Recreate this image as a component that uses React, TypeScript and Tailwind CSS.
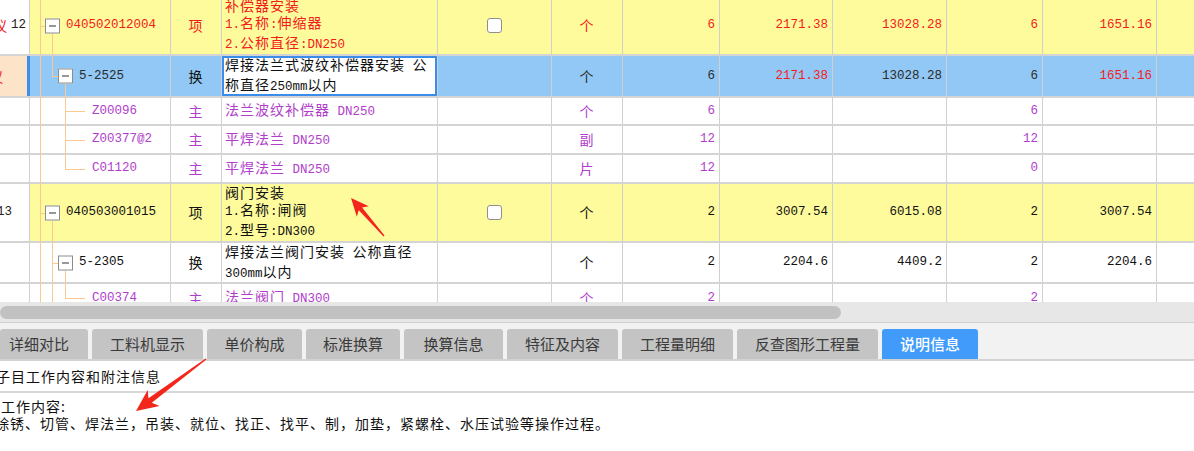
import type { ReactNode } from 'react'

const CJK = "font-['Noto_Sans_CJK_SC','Noto_Sans',sans-serif]"
const MONO = "font-['Liberation_Mono','Noto_Sans_CJK_SC',monospace] text-[12.5px] tracking-normal"

const tone = {
  red: 'text-[#f21c1c]',
  dark: 'text-[#2b2b2b]',
  purple: 'text-[#b13ecb]',
  black: 'text-[#111111]',
}
type Tone = keyof typeof tone

// ascii runs get the half-width mono face, cjk keeps the sans
function Txt({ s }: { s: string }) {
  const parts = s.match(/[\x00-\x7f]+|[^\x00-\x7f]+/g) ?? []
  return (
    <>
      {parts.map((p, i) =>
        /^[\x00-\x7f]/.test(p) ? (
          <span key={i} className={MONO}>{p}</span>
        ) : (
          <span key={i}>{p}</span>
        )
      )}
    </>
  )
}

type TreeKind = 'item' | 'sub' | 'subMore' | 'leaf' | 'leafLast' | 'leafDeep'

function MinusBox({ left }: { left: string }) {
  return (
    <span className={`absolute ${left} top-1/2 -translate-y-1/2 w-[15px] h-[15px] border border-[#8c8c8c] bg-white flex items-center justify-center`}>
      <span className="w-[7px] h-px bg-[#333]" />
    </span>
  )
}

function Tree({ kind }: { kind: TreeKind }) {
  const ln = 'absolute bg-[#f9c98f]'
  return (
    <>
      <span className={`${ln} left-[10px] top-0 bottom-[-2px] w-px`} />
      {kind === 'item' && (
        <>
          <span className={`${ln} left-[10px] top-1/2 w-[5px] h-px`} />
          <span className={`${ln} left-[22px] top-1/2 bottom-[-2px] w-px`} />
          <MinusBox left="left-[15px]" />
        </>
      )}
      {(kind === 'sub' || kind === 'subMore') && (
        <>
          <span className={`${ln} left-[22px] top-0 w-px ${kind === 'sub' ? 'h-1/2' : 'bottom-[-2px]'}`} />
          <span className={`${ln} left-[22px] top-1/2 w-[6px] h-px`} />
          <span className={`${ln} left-[35px] top-1/2 bottom-[-2px] w-px`} />
          <MinusBox left="left-[28px]" />
        </>
      )}
      {(kind === 'leaf' || kind === 'leafLast' || kind === 'leafDeep') && (
        <>
          {kind === 'leafDeep' && <span className={`${ln} left-[22px] top-0 bottom-[-2px] w-px`} />}
          <span className={`${ln} left-[35px] top-0 w-px ${kind === 'leaf' ? 'bottom-[-2px]' : 'h-1/2'}`} />
          <span className={`${ln} left-[35px] top-1/2 w-[20px] h-px`} />
        </>
      )}
    </>
  )
}

type Val = [string, Tone]

interface RowProps {
  h: string
  bg: string
  first: ReactNode
  firstCls: string
  tree: TreeKind
  code: string
  codeTone: Tone
  kind: string
  kindTone: Tone
  name: string[]
  nameTone: Tone
  editing?: boolean
  check?: boolean
  unit: string
  unitTone: Tone
  vals: Val[]
}

const valW = ['w-[97px]', 'w-[113px]', 'w-[114px]', 'w-[96px]', 'w-[114px]']

function GridRow(r: RowProps) {
  const codeLeft = r.tree === 'item' ? 'pl-[36px]' : r.tree.startsWith('sub') ? 'pl-[49px]' : 'pl-[62px]'
  return (
    <div className={`flex ${r.h} border-b-2 border-[#d4d4d4] ${r.bg}`}>
      <div className={`w-[30px] shrink-0 overflow-hidden ${r.firstCls}`}>{r.first}</div>
      <div className="relative w-[141px] shrink-0 border-r border-[#d0d0d0]">
        <Tree kind={r.tree} />
        <div className={`h-full flex items-center ${codeLeft} ${tone[r.codeTone]} ${MONO}`}>{r.code}</div>
      </div>
      <div className={`w-[51px] shrink-0 border-r border-[#d0d0d0] flex items-center justify-center ${tone[r.kindTone]}`}>{r.kind}</div>
      <div className="w-[216px] shrink-0 border-r border-[#d0d0d0] overflow-hidden">
        <div
          className={`h-full flex flex-col justify-center whitespace-pre leading-[17px] ${tone[r.nameTone]} ${
            r.editing ? 'border-2 border-[#3b8de9] bg-white pl-[1px]' : 'pl-[3px]'
          }`}
        >
          {r.name.map((l, i) => (
            <div key={i}>
              <Txt s={l} />
            </div>
          ))}
        </div>
      </div>
      <div className="w-[114px] shrink-0 border-r border-[#d0d0d0] flex items-center justify-center">
        {r.check && <span className="w-[15px] h-[15px] rounded-[3px] border border-[#8f8f8f] bg-white" />}
      </div>
      <div className={`w-[71px] shrink-0 border-r border-[#d0d0d0] flex items-center justify-center ${tone[r.unitTone]}`}>{r.unit}</div>
      {r.vals.map(([v, t], i) => (
        <div key={i} className={`${valW[i]} shrink-0 border-r border-[#d0d0d0] flex items-center justify-end pr-[4px] ${MONO} ${tone[t]}`}>
          {v}
        </div>
      ))}
      <div className="flex-1" />
    </div>
  )
}

const rows: RowProps[] = [
  {
    h: 'h-[59px]',
    bg: 'bg-[#fefb9c]',
    first: (
      <div className="h-full flex items-center -ml-[7px] whitespace-nowrap">
        <span className="text-[#f21c1c]">议</span>
        <span className={`ml-[3px] ${MONO} text-[#222]`}>12</span>
      </div>
    ),
    firstCls: 'bg-white border-r border-[#d0d0d0]',
    tree: 'item',
    code: '040502012004',
    codeTone: 'red',
    kind: '项',
    kindTone: 'red',
    name: ['补偿器安装', '1.名称:伸缩器', '2.公称直径:DN250'],
    nameTone: 'red',
    check: true,
    unit: '个',
    unitTone: 'red',
    vals: [['6', 'red'], ['2171.38', 'red'], ['13028.28', 'red'], ['6', 'red'], ['1651.16', 'red']],
  },
  {
    h: 'h-[42px]',
    bg: 'bg-[#92c8f5]',
    first: (
      <div className="h-full flex items-center -ml-[11px]">
        <span className="text-[#f21c1c]">议</span>
      </div>
    ),
    firstCls: 'bg-[#fde4c8] border-r-[3px] border-[#3d8fea]',
    tree: 'sub',
    code: '5-2525',
    codeTone: 'dark',
    kind: '换',
    kindTone: 'black',
    name: ['焊接法兰式波纹补偿器安装 公', '称直径250mm以内'],
    nameTone: 'black',
    editing: true,
    unit: '个',
    unitTone: 'dark',
    vals: [['6', 'dark'], ['2171.38', 'red'], ['13028.28', 'dark'], ['6', 'dark'], ['1651.16', 'red']],
  },
  {
    h: 'h-[28px]',
    bg: 'bg-white',
    first: null,
    firstCls: 'border-r border-[#d0d0d0]',
    tree: 'leaf',
    code: 'Z00096',
    codeTone: 'purple',
    kind: '主',
    kindTone: 'purple',
    name: ['法兰波纹补偿器 DN250'],
    nameTone: 'purple',
    unit: '个',
    unitTone: 'purple',
    vals: [['6', 'purple'], ['', 'purple'], ['', 'purple'], ['6', 'purple'], ['', 'purple']],
  },
  {
    h: 'h-[29px]',
    bg: 'bg-white',
    first: null,
    firstCls: 'border-r border-[#d0d0d0]',
    tree: 'leaf',
    code: 'Z00377@2',
    codeTone: 'purple',
    kind: '主',
    kindTone: 'purple',
    name: ['平焊法兰 DN250'],
    nameTone: 'purple',
    unit: '副',
    unitTone: 'purple',
    vals: [['12', 'purple'], ['', 'purple'], ['', 'purple'], ['12', 'purple'], ['', 'purple']],
  },
  {
    h: 'h-[29px]',
    bg: 'bg-white',
    first: null,
    firstCls: 'border-r border-[#d0d0d0]',
    tree: 'leafLast',
    code: 'C01120',
    codeTone: 'purple',
    kind: '主',
    kindTone: 'purple',
    name: ['平焊法兰 DN250'],
    nameTone: 'purple',
    unit: '片',
    unitTone: 'purple',
    vals: [['12', 'purple'], ['', 'purple'], ['', 'purple'], ['0', 'purple'], ['', 'purple']],
  },
  {
    h: 'h-[59px]',
    bg: 'bg-[#fefb9c]',
    first: (
      <div className={`h-full flex items-center -ml-[3px] ${MONO} text-[#222]`}>13</div>
    ),
    firstCls: 'bg-white border-r border-[#d0d0d0]',
    tree: 'item',
    code: '040503001015',
    codeTone: 'black',
    kind: '项',
    kindTone: 'black',
    name: ['阀门安装', '1.名称:闸阀', '2.型号:DN300'],
    nameTone: 'black',
    check: true,
    unit: '个',
    unitTone: 'black',
    vals: [['2', 'black'], ['3007.54', 'black'], ['6015.08', 'black'], ['2', 'black'], ['3007.54', 'black']],
  },
  {
    h: 'h-[41px]',
    bg: 'bg-white',
    first: null,
    firstCls: 'border-r border-[#d0d0d0]',
    tree: 'subMore',
    code: '5-2305',
    codeTone: 'black',
    kind: '换',
    kindTone: 'black',
    name: ['焊接法兰阀门安装 公称直径', '300mm以内'],
    nameTone: 'black',
    unit: '个',
    unitTone: 'black',
    vals: [['2', 'black'], ['2204.6', 'black'], ['4409.2', 'black'], ['2', 'black'], ['2204.6', 'black']],
  },
  {
    h: 'h-[30px]',
    bg: 'bg-white',
    first: null,
    firstCls: 'border-r border-[#d0d0d0]',
    tree: 'leafDeep',
    code: 'C00374',
    codeTone: 'purple',
    kind: '主',
    kindTone: 'purple',
    name: ['法兰阀门 DN300'],
    nameTone: 'purple',
    unit: '个',
    unitTone: 'purple',
    vals: [['2', 'purple'], ['', 'purple'], ['', 'purple'], ['2', 'purple'], ['', 'purple']],
  },
]

const tabs = [
  { label: '详细对比', w: 'w-[88px] justify-start pl-[9px]' },
  { label: '工料机显示', w: 'w-[111px] justify-center' },
  { label: '单价构成', w: 'w-[95px] justify-center' },
  { label: '标准换算', w: 'w-[94px] justify-center' },
  { label: '换算信息', w: 'w-[99px] justify-center' },
  { label: '特征及内容', w: 'w-[111px] justify-center' },
  { label: '工程量明细', w: 'w-[111px] justify-center' },
  { label: '反查图形工程量', w: 'w-[141px] justify-center' },
]

function arrow(tx: number, ty: number, px: number, py: number, head: number, hw: number, sw: number) {
  const dx = px - tx
  const dy = py - ty
  const len = Math.hypot(dx, dy)
  const ux = dx / len
  const uy = dy / len
  const nx = -uy
  const ny = ux
  const bx = px - ux * head
  const by = py - uy * head
  const nkx = px - ux * head * 0.8
  const nky = py - uy * head * 0.8
  const pts = [
    [tx + nx * 0.6, ty + ny * 0.6],
    [nkx + nx * sw, nky + ny * sw],
    [bx + nx * hw, by + ny * hw],
    [px, py],
    [bx - nx * hw, by - ny * hw],
    [nkx - nx * sw, nky - ny * sw],
    [tx - nx * 0.6, ty - ny * 0.6],
  ]
  return pts.map((p) => p.map((n) => n.toFixed(1)).join(',')).join(' ')
}

export default function App() {
  return (
    <div className={`relative w-[1194px] h-[451px] overflow-hidden bg-white text-[14px] tracking-[1px] ${CJK}`}>
      {/* grid */}
      <div className="h-[302px] overflow-hidden">
        <div className="-mt-[3px]">
          {rows.map((r, i) => (
            <GridRow key={i} {...r} />
          ))}
        </div>
      </div>

      {/* horizontal scrollbar */}
      <div className="h-[20px] bg-[#e7e7e7] flex items-center">
        <div className="w-[841px] h-[13px] rounded-full bg-[#c1c1c1]" />
      </div>
      <div className="h-px bg-[#cfcfcf]" />

      {/* tabs */}
      <div className="h-[38px] bg-[#f2f2f2] border-b-2 border-[#d2d2d2] flex items-end gap-[4px] tracking-normal">
        {tabs.map((t) => (
          <div key={t.label} className={`${t.w} h-[30px] rounded-t-[3px] bg-[#c4c4c4] flex items-center text-[15px] text-[#3a3a3a]`}>
            {t.label}
          </div>
        ))}
        <div className="w-[96px] h-[30px] rounded-t-[3px] bg-[#409bfa] flex items-center justify-center text-[15px] font-medium text-white">
          说明信息
        </div>
      </div>

      {/* description */}
      <div className="h-[32px] flex items-center border-b-2 border-[#d8d8d8] text-[#111]">
        <span className="-ml-[4px]">子目工作内容和附注信息</span>
      </div>
      <div className="pt-[5px] leading-[17px] text-[#111]">
        <div className="pl-[1px]">工作内容:</div>
        <div className="-ml-[5px] whitespace-nowrap">除锈、切管、焊法兰，吊装、就位、找正、找平、制，加垫，紧螺栓、水压试验等操作过程。</div>
      </div>

      {/* annotation arrows */}
      <svg className="absolute left-0 top-0 pointer-events-none" width="1194" height="451">
        <polygon points={arrow(384, 236, 351, 198, 18, 8, 2.2)} fill="#f3261c" />
        <polygon points={arrow(206, 359, 136, 411, 22, 10, 2.8)} fill="#f3261c" />
      </svg>
    </div>
  )
}
